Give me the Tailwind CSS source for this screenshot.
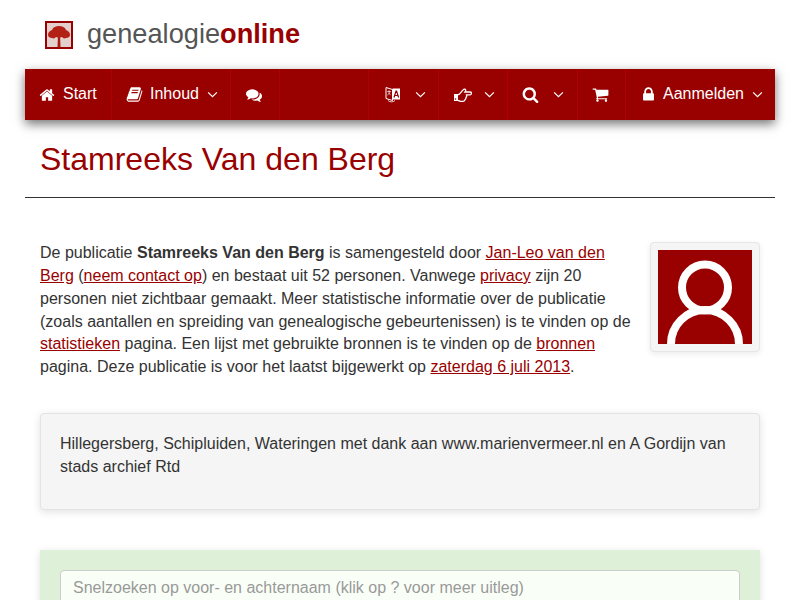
<!DOCTYPE html>
<html lang="nl">
<head>
  <meta charset="UTF-8" />
  <title>Stamreeks Van den Berg</title>
  <script src="https://cdn.jsdelivr.net/npm/@tailwindcss/browser@4"></script>
</head>
<body class="bg-white h-screen overflow-hidden font-['Liberation_Sans',Arial,sans-serif] text-[16px] leading-[22.857px] text-[#333]">

  <!-- Logo -->
  <header class="h-[69px] pl-[45px] flex items-center gap-[14px]">
    <div class="w-[28px] h-[28px] border-2 border-[#990000] bg-[#e3cfcb] mt-[1px] overflow-hidden">
      <svg viewBox="0 0 24 24" class="w-full h-full blur-[0.6px]">
        <path d="M11 12h2l.5 12h-3z" fill="#a81c10"/>
        <path d="M1 12c0-3 2-4 4-5 1-3 4-4 7-4s6 1 7 4c2 1 4 2 4 5 0 2-2 3-4 3-2 1-3 0-4-1-2 1-4 1-6 0-1 1-2 2-4 1-2 0-4-1-4-3z" fill="#b32015"/>
      </svg>
    </div>
    <a href="#" class="text-[27.2px] leading-none text-[#555] -mt-[1px]">genealogie<b class="text-[#990000]">online</b></a>
  </header>

  <div class="px-[25px]">
    <!-- Navbar -->
    <nav class="relative flex h-[51px] bg-[#990000] text-white shadow-[0_4px_10px_rgba(0,0,0,0.55)]">
      <a href="#" class="w-[86px] pl-[14px] flex items-center">
        <svg viewBox="0 0 1792 1792" class="w-[16px] h-[16px] fill-white"><path d="M1472 992v480q0 26-19 45t-45 19h-384v-384h-256v384h-384q-26 0-45-19t-19-45v-480q0-1 .5-3t.5-3l575-474 575 474q1 2 1 6zm223-69l-62 74q-8 9-21 11h-3q-13 0-21-7l-692-577-692 577q-12 8-24 7-13-2-21-11l-62-74q-8-10-7-23.500t11-21.500l719-599q32-26 76-26t76 26l244 204v-195q0-14 9-23t23-9h192q14 0 23 9t9 23v408l219 182q10 8 11 21.500t-7 23.500z"/></svg>
        <span class="ml-[8px]">Start</span>
      </a>
      <a href="#" class="w-[119px] pl-[14px] flex items-center border-l border-[#b00000]">
        <svg viewBox="0 0 1792 1792" class="w-[17px] h-[17px] fill-white"><path d="M1703 478q40 57 18 129l-275 906q-19 64-76.500 107.500t-122.500 43.500h-923q-77 0-148.500-53.500t-99.500-131.500q-24-67-2-127 0-4 3-27t4-37q1-8-3-21.500t-3-19.500q2-11 8-21t16.500-23.500 16.500-23.500q23-38 45-91.500t30-91.500q3-10 .5-30t-.5-28q3-11 17-28t17-23q21-36 42-92t25-90q1-9-2.500-32t.5-28q4-13 22-30.500t22-22.500q19-26 42.500-84.500t27.500-96.500q1-8-3-25.500t-2-26.500q2-8 9-18t18-23 17-21q8-12 16.500-30.500t15-35 16-36 19.500-32 26.500-23.500 36-11.500 47.500 5.500l-1 3q38-9 51-9h761q74 0 114 56t18 130l-274 906q-36 119-71.500 153.500t-128.500 34.500h-869q-27 0-38 15-11 16-1 43 24 70 144 70h923q29 0 56-15.500t35-41.500l300-987q7-22 5-57 38 15 59 43zm-1064 2q-4 13 2 22.500t20 9.500h608q13 0 25.500-9.500t16.500-22.500l21-64q4-13-2-22.500t-20-9.500h-608q-13 0-25.500 9.500t-16.500 22.500zm-83 256q-4 13 2 22.500t20 9.500h608q13 0 25.500-9.500t16.500-22.500l21-64q4-13-2-22.500t-20-9.500h-608q-13 0-25.500 9.500t-16.500 22.500z"/></svg>
        <span class="ml-[7px]">Inhoud</span>
        <svg viewBox="0 0 12 8" class="ml-[8px] w-[11px] h-[7px] fill-none stroke-white stroke-[1.400]"><path d="M1 1.500l5 5 5-5"/></svg>
      </a>
      <a href="#" class="w-[49px] pl-[15px] flex items-center border-l border-[#b00000]">
        <svg viewBox="0 0 1792 1792" class="w-[16px] h-[16px] fill-white"><path d="M1408 768q0 139-94 257t-256.500 186.500-353.500 68.500q-86 0-176-16-124 88-278 128-36 9-86 16h-3q-11 0-20.500-8t-11.500-21q-1-3-1-6.500t.5-6.500 2-6l2.500-5 3.500-5.500 4-5 4.500-5 4-4.500q5-6 23-25t26-29.500 22.500-29 25-38.500 20.500-44q-124-72-195-177t-71-224q0-139 94-257t256.500-186.500 353.500-68.500 353.500 68.500 256.500 186.500 94 257zm384 256q0 120-71 224.500t-195 176.500q10 24 20.500 44t25 38.500 22.500 29 26 29.500 23 25q1 1 4 4.500t4.500 5 4 5 3.500 5.500l2.500 5 2 6 .5 6.500-1 6.500q-3 14-13 22t-22 7q-50-7-86-16-154-40-278-128-90 16-176 16-271 0-472-132 58 4 88 4 161 0 309-45t264-129q125-92 192-212t67-254q0-77-23-152 129 71 204 178t75 230z"/></svg>
      </a>
      <div class="w-[89px] border-l border-[#b00000]"></div>
      <a href="#" class="w-[70px] pl-[16px] flex items-center border-l border-[#b00000]">
        <svg viewBox="0 0 16 17" class="w-[16px] h-[17px]">
          <path d="M1 1.500l6.500 2v11L1 12.500z" fill="none" stroke="#fff" stroke-width="1"/>
          <path d="M2.300 5.500h3.400M4 4.300v1.200M5 5.500c-.3 1.500-1.200 2.800-2.500 3.500M3.300 6.500c.5 1 1.300 1.800 2.300 2.300" fill="none" stroke="#fff" stroke-width=".7"/>
          <path d="M7.500 2.500h7.500v11H7.500z" fill="#fff"/>
          <path d="M9 11.500l2-6.500h.6l2 6.500M9.700 9.500h3.300" fill="none" stroke="#990000" stroke-width="1.200"/>
          <path d="M3 14.500c1.500 1.800 5.500 1.800 7 0" fill="none" stroke="#fff" stroke-width=".8"/>
        </svg>
        <svg viewBox="0 0 12 8" class="ml-[14px] w-[11px] h-[7px] fill-none stroke-white stroke-[1.400]"><path d="M1 1.500l5 5 5-5"/></svg>
      </a>
      <a href="#" class="w-[69px] pl-[15px] flex items-center border-l border-[#b00000]">
        <svg viewBox="0 0 18 14" class="w-[18px] h-[14px]">
          <path d="M0 6h4v7H0z" fill="#fff"/>
          <path d="M4 6.700C6 6.500 7 4 8.500 2.500 9.500 1.500 10 .8 11 1.200 12 1.600 11.800 3 11 4h5a1.400 1.400 0 0 1 0 2.800h-3.500c.5 1.200 0 2.200-.5 2.700 0 1.500-.5 2-1.200 2.500-.3 1-.8 1.300-1.800 1.300H6.500c-1 0-1.500-.8-2.500-.8" fill="none" stroke="#fff" stroke-width="1.300"/>
          <circle cx="1.500" cy="11" r=".8" fill="#990000"/>
        </svg>
        <svg viewBox="0 0 12 8" class="ml-[12px] w-[11px] h-[7px] fill-none stroke-white stroke-[1.400]"><path d="M1 1.500l5 5 5-5"/></svg>
      </a>
      <a href="#" class="w-[70px] pl-[14px] flex items-center border-l border-[#b00000]">
        <svg viewBox="0 0 1792 1792" class="w-[17px] h-[17px] fill-white"><path d="M1216 832q0-185-131.500-316.500t-316.500-131.500-316.500 131.500-131.500 316.500 131.500 316.500 316.500 131.500 316.500-131.500 131.500-316.500zm512 832q0 52-38 90t-90 38q-54 0-90-38l-343-342q-179 124-399 124-143 0-273.500-55.500t-225-150-150-225-55.500-273.500 55.500-273.500 150-225 225-150 273.500-55.500 273.500 55.500 225 150 150 225 55.500 273.500q0 220-124 399l343 343q37 37 37 90z"/></svg>
        <svg viewBox="0 0 12 8" class="ml-[14px] w-[11px] h-[7px] fill-none stroke-white stroke-[1.400]"><path d="M1 1.500l5 5 5-5"/></svg>
      </a>
      <a href="#" class="w-[48px] pl-[14px] flex items-center border-l border-[#b00000]">
        <svg viewBox="0 0 1792 1792" class="w-[17px] h-[17px] fill-white"><path d="M704 1536q0 52-38 90t-90 38-90-38-38-90 38-90 90-38 90 38 38 90zm896 0q0 52-38 90t-90 38-90-38-38-90 38-90 90-38 90 38 38 90zm128-1088v512q0 24-16.500 42.500t-40.500 21.500l-1044 122q13 60 13 70 0 16-24 64h920q26 0 45 19t19 45-19 45-45 19h-1024q-26 0-45-19t-19-45q0-11 8-31.500t16-36 21.500-40 15.500-29.500l-177-823h-204q-26 0-45-19t-19-45 19-45 45-19h256q16 0 28.500 6.500t19.500 15.500 13 24.500 8 26 5.500 29.500 4.500 26h1201q26 0 45 19t19 45z"/></svg>
      </a>
      <a href="#" class="w-[150px] pl-[14px] flex items-center border-l border-[#b00000]">
        <svg viewBox="0 0 1792 1792" class="w-[17px] h-[17px] fill-white"><path d="M640 768h512v-192q0-106-75-181t-181-75-181 75-75 181v192zm832 96v576q0 40-28 68t-68 28h-960q-40 0-68-28t-28-68v-576q0-40 28-68t68-28h32v-192q0-184 132-316t316-132 316 132 132 316v192h32q40 0 68 28t28 68z"/></svg>
        <span class="ml-[6px]">Aanmelden</span>
        <svg viewBox="0 0 12 8" class="ml-[8px] w-[11px] h-[7px] fill-none stroke-white stroke-[1.400]"><path d="M1 1.500l5 5 5-5"/></svg>
      </a>
    </nav>

    <!-- Title -->
    <div class="h-[78px] px-[15px] pt-[20px] border-b border-[#333]">
      <h1 class="text-[32px] leading-[38px] text-[#990000]">Stamreeks Van den Berg</h1>
    </div>

    <main class="px-[15px]">
      <!-- Intro -->
      <section class="flex justify-between mt-[44px]">
        <p class="w-[598px]">De publicatie <b>Stamreeks Van den Berg</b> is samengesteld door <a href="#" class="text-[#990000] underline">Jan-Leo van den Berg</a> (<a href="#" class="text-[#990000] underline">neem contact op</a>) en bestaat uit 52 personen. Vanwege <a href="#" class="text-[#990000] underline">privacy</a> zijn 20 personen niet zichtbaar gemaakt. Meer statistische informatie over de publicatie (zoals aantallen en spreiding van genealogische gebeurtenissen) is te vinden op de <a href="#" class="text-[#990000] underline">statistieken</a> pagina. Een lijst met gebruikte bronnen is te vinden op de <a href="#" class="text-[#990000] underline">bronnen</a> pagina. Deze publicatie is voor het laatst bijgewerkt op <a href="#" class="text-[#990000] underline">zaterdag 6 juli 2013</a>.</p>
        <div class="w-[110px] h-[110px] p-[7px] bg-[#f5f5f5] border border-[#e6e6e6] rounded-[4px] shadow-[0_2px_6px_rgba(0,0,0,0.08)]">
          <svg viewBox="0 0 94 94" class="w-[94px] h-[94px] bg-[#990000]">
            <g class="blur-[0.4px]">
              <circle cx="47" cy="37.500" r="23" fill="none" stroke="#fff" stroke-width="8"/>
              <circle cx="47" cy="94" r="34" fill="none" stroke="#fff" stroke-width="8"/>
            </g>
          </svg>
        </div>
      </section>

      <!-- Note -->
      <section class="mt-[34px] h-[97px] py-[19px] px-[19px] bg-[#f5f5f5] border border-[#e3e3e3] rounded-[4px] shadow-[0_2px_8px_rgba(0,0,0,0.12)]">
        Hillegersberg, Schipluiden, Wateringen met dank aan www.marienvermeer.nl en A Gordijn van stads archief Rtd
      </section>

      <!-- Quick search -->
      <section class="mt-[40px] h-[120px] p-[20px] bg-[#dff0d8] shadow-[0_2px_8px_rgba(0,0,0,0.12)]">
        <input type="text" placeholder="Snelzoeken op voor- en achternaam (klik op ? voor meer uitleg)" class="w-full h-[36px] px-[12px] bg-[#f9fff7] border border-[#ccc] rounded-[4px] placeholder:text-[#999] outline-none" />
      </section>
    </main>
  </div>

</body>
</html>
